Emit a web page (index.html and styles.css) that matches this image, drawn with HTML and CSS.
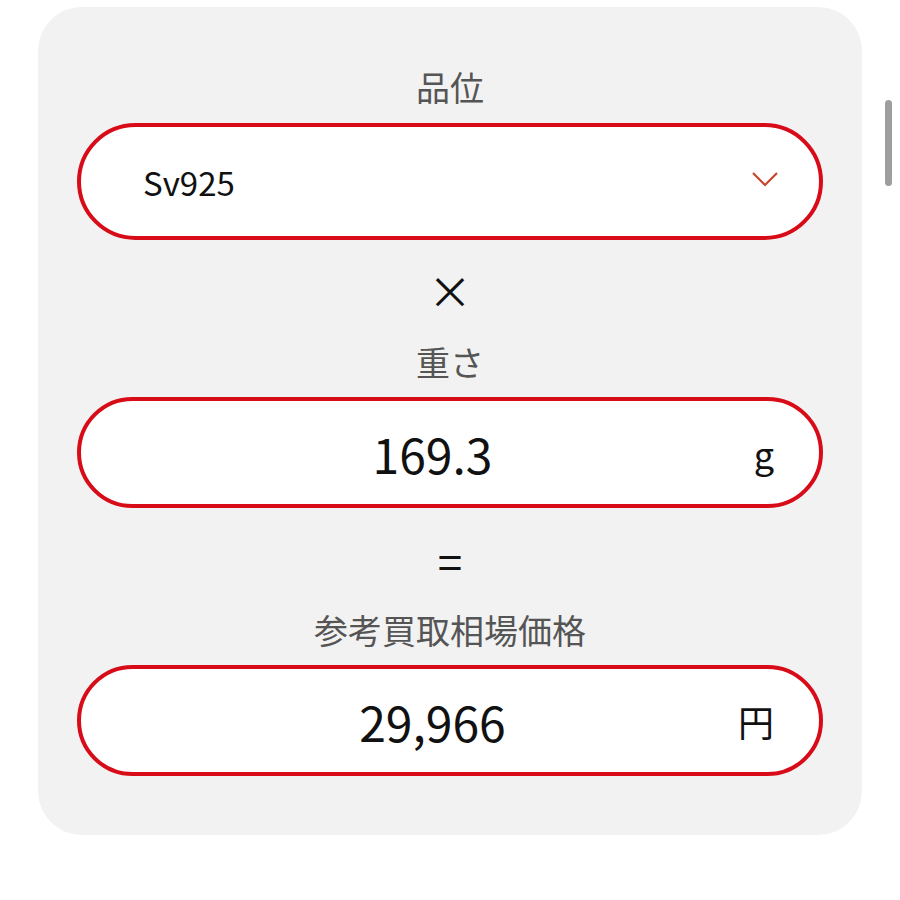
FILE: index.html
```html
<!DOCTYPE html>
<html lang="ja">
<head>
<meta charset="utf-8">
<title>買取相場計算</title>
<link rel="stylesheet" href="styles.css">
</head>
<body>
<div class="card">
  <div class="label label-first">品位</div>
  <div class="field select">
    <span class="select-value">Sv925</span>
    <svg class="chevron" width="28" height="16" viewBox="0 0 28 16"><polyline points="2,2 14,14 26,2" fill="none" stroke="#c9442a" stroke-width="2.2"/></svg>
  </div>
  <div class="op">×</div>
  <div class="label">重さ</div>
  <div class="field">
    <span class="value">169.3</span>
    <span class="unit">g</span>
  </div>
  <div class="op op-eq">=</div>
  <div class="label">参考買取相場価格</div>
  <div class="field">
    <span class="value">29,966</span>
    <span class="unit">円</span>
  </div>
</div>
<div class="scrollbar"></div>
</body>
</html>
```
FILE: styles.css
```css
html, body {
  margin: 0;
  padding: 0;
  background: #ffffff;
}
body {
  width: 900px;
  height: 900px;
  font-family: "Noto Sans CJK JP", "Noto Sans", sans-serif;
  color: #111;
}
.card {
  margin: 7px 0 0 38px;
  width: 824px;
  height: 828px;
  box-sizing: border-box;
  background: #f2f2f2;
  border-radius: 44px;
  padding: 56px 39px 0;
  display: flex;
  flex-direction: column;
}
.label {
  text-align: center;
  font-size: 34px;
  line-height: 48px;
  height: 48px;
  color: #555;
  margin-top: 22px;
  margin-bottom: 11px;
}
.label-first {
  margin-top: 0;
  margin-bottom: 12px;
}
.field {
  height: 111px;
  box-sizing: border-box;
  border: 4px solid #d70c18;
  border-radius: 60px;
  background: #fff;
  display: flex;
  align-items: center;
  padding: 0 45px 0 50px;
}
.select {
  height: 117px;
  padding: 0 40px 0 62px;
  justify-content: space-between;
}
.select-value {
  font-size: 33px;
  color: #111;
}
.chevron {
  display: block;
  margin-top: -6px;
}
.value {
  flex: 1;
  text-align: center;
  font-size: 48px;
  color: #111;
}
.unit {
  width: 40px;
  text-align: right;
  font-size: 36px;
  color: #111;
}
.op {
  margin-top: 27px;
  height: 46px;
  line-height: 46px;
  text-align: center;
  font-size: 44px;
  color: #111;
}
.op-eq {
  margin-top: 29px;
}
.op + .label {
  margin-top: 25px;
}
.op-eq + .label {
  margin-top: 23px;
}
.scrollbar {
  position: absolute;
  left: 885px;
  top: 100px;
  width: 7px;
  height: 86px;
  border-radius: 4px;
  background: #9e9e9e;
}
```
